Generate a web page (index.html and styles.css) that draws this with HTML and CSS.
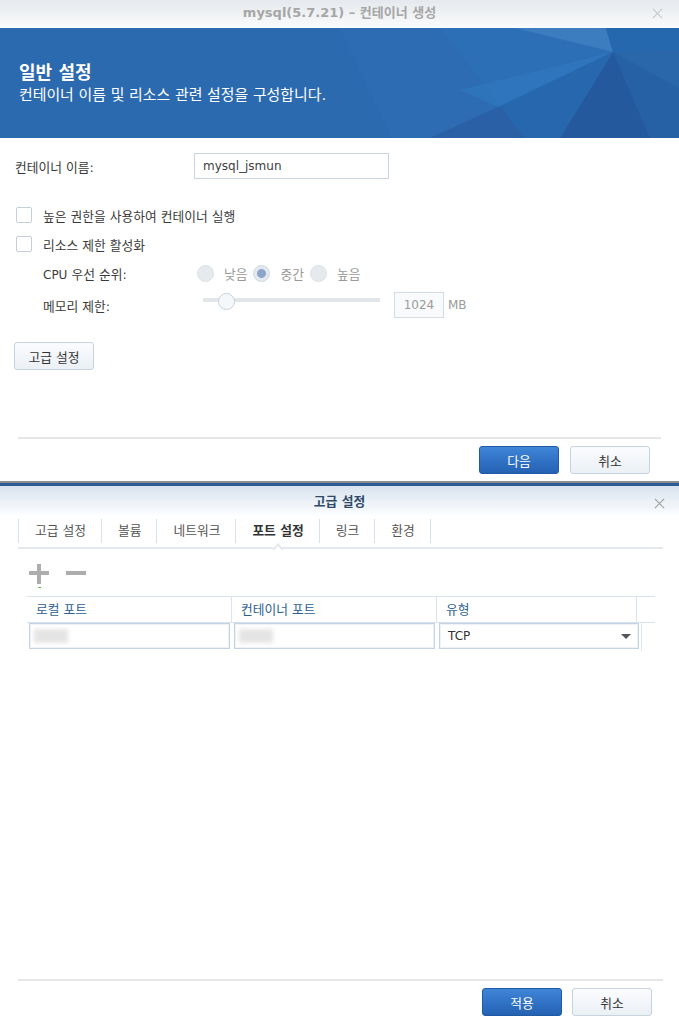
FILE: index.html
```html
<!DOCTYPE html>
<html lang="ko">
<head>
  <meta charset="UTF-8" />
  <meta name="viewport" content="width=device-width, initial-scale=1.0" />
  <title>mysql(5.7.21) – 컨테이너 생성</title>

<link rel="stylesheet" href="styles.css">

</head>
<body>

<section class="dialog create-dlg">
  <header class="titlebar">
    <span class="title">mysql(5.7.21) – 컨테이너 생성</span>
    <svg class="close" viewBox="0 0 12 12"><path d="M1 1L11 11M11 1L1 11"/></svg>
  </header>

  <div class="banner">
    <svg class="banner-art" viewBox="0 0 679 110" preserveAspectRatio="none">
      <rect width="679" height="110" fill="#2c6ab0"/>
      <polygon points="340,0 440,0 500,78 430,110 392,110" fill="#2d6cb3"/>
      <polygon points="440,0 515,0 613,24 500,78" fill="#2c6fb6"/>
      <polygon points="460,62 613,24 500,80" fill="#2f7cc3" opacity="0.5"/>
      <polygon points="515,0 606,0 613,24" fill="#3b7dbf"/>
      <polygon points="606,0 679,0 679,22 613,24" fill="#2668ae"/>
      <polygon points="613,24 679,22 679,110 650,110" fill="#2a66aa"/>
      <polygon points="613,24 679,60 679,110 650,110" fill="#2159a0" opacity="0.4"/>
      <polygon points="613,24 650,110 560,110" fill="#24599e"/>
      <polygon points="500,78 613,24 560,110 525,110" fill="#2767ad"/>
      <polygon points="430,110 500,78 525,110" fill="#2a61a6"/>
    </svg>
    <h1>일반 설정</h1>
    <p>컨테이너 이름 및 리소스 관련 설정을 구성합니다.</p>
  </div>

  <div class="form">
    <div class="name-row">
      <label for="cname">컨테이너 이름:</label>
      <input type="text" id="cname" class="text-input" value="mysql_jsmun">
    </div>

    <div class="check-row first"><span class="checkbox"></span>높은 권한을 사용하여 컨테이너 실행</div>
    <div class="check-row"><span class="checkbox"></span>리소스 제한 활성화</div>

    <div class="sub-row cpu-row">
      <span class="sub-label"><span class="latin">CPU</span> 우선 순위:</span>
      <span class="radio"></span><span class="radio-text">낮음</span>
      <span class="radio checked"></span><span class="radio-text">중간</span>
      <span class="radio"></span><span class="radio-text">높음</span>
    </div>

    <div class="sub-row mem-row">
      <span class="sub-label">메모리 제한:</span>
      <div class="slider"><span class="thumb"></span></div>
      <input type="text" class="num-input" value="1024" disabled>
      <span class="unit">MB</span>
    </div>

    <button class="btn adv-btn">고급 설정</button>
  </div>

  <footer class="footer">
    <button class="btn primary">다음</button>
    <button class="btn">취소</button>
  </footer>
</section>

<section class="dialog adv-dlg">
  <header class="titlebar adv-title">
    <span class="title">고급 설정</span>
    <svg class="close" viewBox="0 0 12 12"><path d="M1 1L11 11M11 1L1 11"/></svg>
  </header>

  <nav class="tabs">
    <span class="tab">고급 설정</span>
    <span class="tab">볼륨</span>
    <span class="tab">네트워크</span>
    <span class="tab active">포트 설정</span>
    <span class="tab">링크</span>
    <span class="tab">환경</span>
  </nav>

  <div class="tab-body">
    <div class="toolbar">
      <svg class="tool" width="20" height="25" viewBox="0 0 20 25">
        <rect x="8" y="0" width="4" height="20" fill="#adadad"/>
        <rect x="0" y="7" width="20" height="4" fill="#adadad"/>
        <rect x="9" y="23" width="3" height="1" fill="#6cbf3c"/>
      </svg>
      <svg class="tool" width="20" height="25" viewBox="0 0 20 25">
        <rect x="0" y="7" width="20" height="4" fill="#adadad"/>
      </svg>
    </div>

    <div class="port-grid">
      <div class="grid-head">
        <span>로컬 포트</span>
        <span>컨테이너 포트</span>
        <span>유형</span>
        <span></span>
      </div>
      <div class="grid-row">
        <div class="cell"><div class="port-input"><span class="blur"></span></div></div>
        <div class="cell"><div class="port-input"><span class="blur"></span></div></div>
        <div class="cell last"><div class="select">TCP<span class="caret"></span></div></div>
      </div>
    </div>
  </div>

  <footer class="footer adv-footer">
    <button class="btn primary">적용</button>
    <button class="btn">취소</button>
  </footer>
</section>

</body>
</html>
```

FILE: styles.css
```css
html, body {
  margin: 0;
  padding: 0;
}

body {
  width: 679px;
  font-family: "DejaVu Sans", "Noto Sans CJK KR", sans-serif;
  font-size: 12.75px;
  color: #3a3a3a;
  background: #fff;
}

.latin {
  font-size: 12px;
}

.dialog {
  display: flex;
  flex-direction: column;
  box-sizing: border-box;
  background: #fff;
}

/* title bars */
.titlebar {
  position: relative;
  height: 28px;
  text-align: center;
  background: linear-gradient(#e5e9ed, #fafbfc);
}

.titlebar .title {
  line-height: 25px;
  font-size: 13px;
  font-weight: bold;
  color: #a6a6a6;
}

.close {
  position: absolute;
  right: 16px;
  top: 8px;
  width: 11px;
  height: 11px;
  stroke: #c8c8c8;
  stroke-width: 1.3;
  fill: none;
}

/* first dialog */
.create-dlg {
  height: 483px;
  border-bottom: 2px solid #8e8e8e;
}

.banner {
  position: relative;
  height: 110px;
  box-sizing: border-box;
  padding: 33px 0 0 19px;
  color: #fff;
  overflow: hidden;
}

.banner-art {
  position: absolute;
  top: 0;
  left: 0;
  width: 100%;
  height: 100%;
}

.banner h1 {
  position: relative;
  margin: 0;
  font-size: 18px;
  line-height: 23px;
  font-weight: bold;
}

.banner p {
  position: relative;
  margin: 1px 0 0;
  font-size: 14.9px;
  line-height: 20px;
}

.form {
  flex: 1;
  padding: 15px 0 0 15px;
}

.name-row {
  display: flex;
  align-items: center;
  height: 26px;
}

.name-row label {
  width: 179px;
}

.text-input {
  width: 195px;
  height: 26px;
  box-sizing: border-box;
  border: 1px solid #c9d5e1;
  padding: 0 8px;
  font: inherit;
  font-size: 12px;
  color: #404040;
  outline: none;
}

.check-row {
  display: flex;
  align-items: center;
  height: 16px;
  margin-top: 13px;
  padding-left: 1px;
}

.check-row.first {
  margin-top: 28px;
}

.checkbox {
  width: 16px;
  height: 16px;
  box-sizing: border-box;
  border: 1px solid #c6ced7;
  border-radius: 2px;
  background: #fff;
  margin-right: 11px;
}

.sub-row {
  display: flex;
  align-items: center;
  padding-left: 28px;
}

.sub-label {
  width: 154px;
}

.cpu-row {
  height: 17px;
  margin-top: 13px;
}

.radio {
  width: 17px;
  height: 17px;
  box-sizing: border-box;
  border-radius: 50%;
  border: 1px solid #dbe1e7;
  background: #e6eaef;
  margin-right: 10px;
}

.radio.checked {
  border-color: #cdd7e2;
  background: radial-gradient(circle, #8ba6c8 0 4px, #e3e9ef 5px);
}

.radio-text {
  color: #9a9a9a;
  margin-right: 6px;
}

.mem-row {
  height: 26px;
  margin-top: 10px;
}

.slider {
  position: relative;
  align-self: flex-start;
  width: 177px;
  height: 17px;
  margin: 1px 0 0 6px;
  background: linear-gradient(#e1e6e9, #e1e6e9) no-repeat 0 5px / 100% 4px;
  border-radius: 2px;
}

.thumb {
  position: absolute;
  left: 15px;
  top: 0;
  width: 17px;
  height: 17px;
  box-sizing: border-box;
  border-radius: 50%;
  border: 1px solid #c9d3dd;
  background: #f5f8fb;
}

.num-input {
  width: 50px;
  height: 26px;
  box-sizing: border-box;
  margin-left: 14px;
  padding: 0;
  border: 1px solid #d3dce5;
  background: #f8fafc;
  color: #9a9a9a;
  font: inherit;
  font-size: 12px;
  text-align: center;
}

.unit {
  margin-left: 4px;
  font-size: 12px;
  color: #9a9a9a;
}

/* buttons */
.btn {
  display: block;
  width: 80px;
  height: 28px;
  padding: 0;
  border: 1px solid #c6d3df;
  border-radius: 3px;
  background: linear-gradient(#fbfcfe, #ebf0f5);
  color: #333;
  font: inherit;
}

.btn.primary {
  border-color: #1f5aa4;
  background: linear-gradient(#3f85d8, #2461b3);
  color: #fff;
}

.adv-btn {
  margin: 24px 0 0 -1px;
}

.footer {
  display: flex;
  justify-content: flex-end;
  gap: 11px;
  margin: 0 18px;
  padding: 7px 11px 7px 0;
  border-top: 2px solid #e6e6e6;
}

/* second dialog */
.adv-dlg {
  height: 539px;
  border-top: 3px solid #2c5c95;
}

.adv-title {
  height: 30px;
  background: linear-gradient(#d8e3ee, #fdfeff);
}

.adv-title .title {
  line-height: 31px;
  font-size: 12.75px;
  color: #2f4a68;
}

.adv-title .close {
  right: 14px;
  top: 12px;
  stroke: #a2a2a2;
}

.tabs {
  display: flex;
  margin: 0 16px 0 18px;
  padding: 3px 0 4px;
  border-bottom: 2px solid #e5e8ec;
}

.tab {
  position: relative;
  height: 24px;
  line-height: 24px;
  padding: 0 15px 0 16px;
  border-left: 1px solid #d6e1ec;
  color: #555;
}

.tab:last-child {
  border-right: 1px solid #d6e1ec;
}

.tab.active {
  font-weight: bold;
  color: #333;
}

.tab.active::after {
  content: "";
  position: absolute;
  left: 50%;
  top: calc(100% + 2px);
  width: 8px;
  height: 8px;
  margin-left: -4px;
  box-sizing: border-box;
  border-left: 2px solid #e5e8ec;
  border-top: 2px solid #e5e8ec;
  background: #fff;
  transform: rotate(45deg);
}

.tab-body {
  flex: 1;
}

.toolbar {
  display: flex;
  gap: 17px;
  margin: 15px 0 0 29px;
  height: 25px;
}

.port-grid {
  width: 628px;
  margin: 7px 0 0 27px;
}

.grid-head {
  display: grid;
  grid-template-columns: 205px 205px 200px 18px;
  border-top: 1px solid #d6e2ed;
  border-bottom: 1px solid #d6e2ed;
}

.grid-head span {
  height: 25px;
  line-height: 25px;
  padding-left: 9px;
  color: #2e5e91;
  border-right: 1px solid #dae4ee;
}

.grid-head span:last-child {
  border-right: none;
}

.grid-row {
  display: grid;
  grid-template-columns: 205px 205px 205px;
}

.cell {
  padding: 0 2px 2px;
}

.cell.last {
  border-right: 1px solid #dde6ef;
}

.port-input,
.select {
  display: flex;
  align-items: center;
  height: 26px;
  box-sizing: border-box;
  border: 1px solid #c3d3e3;
  box-shadow: inset 0 0 0 1px #edf2f7;
  background: #fff;
}

.port-input {
  padding-left: 4px;
}

.blur {
  width: 34px;
  height: 14px;
  background: #dedede;
  filter: blur(2px);
  opacity: 0.8;
}

.select {
  justify-content: space-between;
  padding: 0 7px 0 8px;
  font-size: 12px;
  color: #333;
}

.caret {
  width: 0;
  height: 0;
  border-left: 5px solid transparent;
  border-right: 5px solid transparent;
  border-top: 5px solid #555;
}

.adv-footer {
  gap: 10px;
  margin: 0 16px 0 18px;
  padding-bottom: 6px;
}
```
